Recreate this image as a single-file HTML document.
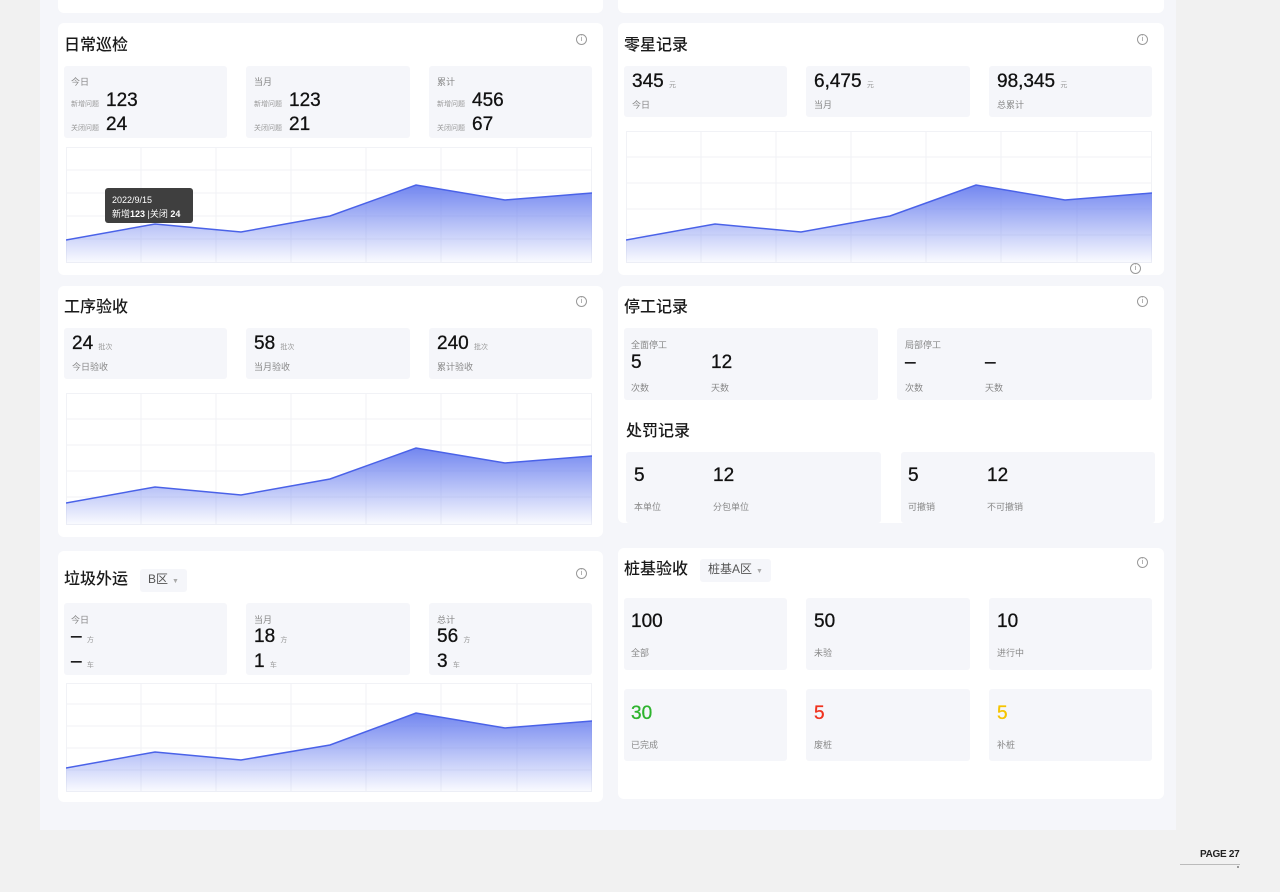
<!DOCTYPE html>
<html><head><meta charset="utf-8">
<style>
*{margin:0;padding:0;box-sizing:border-box}
body{width:1280px;height:892px;background:#f1f1f1;position:relative;overflow:hidden;font-family:"Liberation Sans","Noto Sans CJK SC",sans-serif;color:#1a1a1a}
.a{position:absolute}
.panel{left:40px;top:0;width:1136px;height:830px;background:#f5f6fa}
.card{background:#fff;border-radius:6px}
.box{background:#f5f6fa;border-radius:3px}
.t{font-size:16px;font-weight:500;color:#1a1a1a;line-height:20px;margin-top:2px}
.s{font-size:9px;color:#888}
.xs{font-size:7px;color:#999;-webkit-text-stroke:0}
.n{font-size:19px;color:#111;-webkit-text-stroke:.3px #111}
.ic{width:11px;height:11px;border:1px solid #999;border-radius:50%;font-size:7px;color:#888;text-align:center;line-height:9px}
.dd{background:#f5f6fa;border-radius:3px;font-size:12px;color:#555;padding:0 8px;line-height:21px}
.dd i{font-style:normal;font-size:7px;color:#aaa;margin-left:4px}
svg g{stroke:#f1f2f6}
</style></head><body>
<div class="a panel"></div>
<div class="a card" style="left:58px;top:-10px;width:545px;height:23px"></div>
<div class="a card" style="left:618px;top:-10px;width:546px;height:23px"></div>

<svg width="0" height="0" style="position:absolute"><defs><linearGradient id="g" x1="0" y1="0" x2="0" y2="1"><stop offset="0" stop-color="#6b80ef" stop-opacity=".95"/><stop offset="1" stop-color="#6b80ef" stop-opacity=".03"/></linearGradient></defs></svg>

<!-- card 1 -->
<div class="a card" style="left:58px;top:23px;width:545px;height:252px"></div>
<div class="a t" style="left:64px;top:34px">日常巡检</div>
<div class="a ic" style="left:576px;top:34px">i</div>
<div class="a box" style="left:64px;top:66px;width:163px;height:72px"></div>
<div class="a box" style="left:246px;top:66px;width:164px;height:72px"></div>
<div class="a box" style="left:429px;top:66px;width:163px;height:72px"></div>
<div class="a s" style="left:71px;top:75px">今日</div>
<div class="a xs" style="left:71px;top:99px">新增问题</div><div class="a n" style="left:106px;top:90px">123</div>
<div class="a xs" style="left:71px;top:123px">关闭问题</div><div class="a n" style="left:106px;top:114px">24</div>
<div class="a s" style="left:254px;top:75px">当月</div>
<div class="a xs" style="left:254px;top:99px">新增问题</div><div class="a n" style="left:289px;top:90px">123</div>
<div class="a xs" style="left:254px;top:123px">关闭问题</div><div class="a n" style="left:289px;top:114px">21</div>
<div class="a s" style="left:437px;top:75px">累计</div>
<div class="a xs" style="left:437px;top:99px">新增问题</div><div class="a n" style="left:472px;top:90px">456</div>
<div class="a xs" style="left:437px;top:123px">关闭问题</div><div class="a n" style="left:472px;top:114px">67</div>
<svg class="a" style="left:66px;top:147px" width="526" height="116"><g stroke-width="1" fill="none"><rect x=".5" y=".5" width="525" height="115"/><path d="M75 0V116M150 0V116M225 0V116M300 0V116M375 0V116M451 0V116M0 23H526M0 46H526M0 69H526M0 92H526"/></g><path d="M0 93L89 77L175 85L264 69L350 38L439 53L526 46V116H0Z" fill="url(#g)"/><path d="M0 93L89 77L175 85L264 69L350 38L439 53L526 46" stroke="#4a62e8" stroke-width="1.5" fill="none"/></svg>
<div class="a" style="left:105px;top:188px;width:88px;height:35px;background:#3f3f3f;border-radius:3px;color:#fff;font-size:9px;padding:5px 7px;line-height:14px">2022/9/15<br>新增<b>123</b> |关闭 <b>24</b></div>

<!-- card 2 -->
<div class="a card" style="left:618px;top:23px;width:546px;height:252px"></div>
<div class="a t" style="left:624px;top:34px">零星记录</div>
<div class="a ic" style="left:1137px;top:34px">i</div>
<div class="a box" style="left:624px;top:66px;width:163px;height:51px"></div>
<div class="a box" style="left:806px;top:66px;width:164px;height:51px"></div>
<div class="a box" style="left:989px;top:66px;width:163px;height:51px"></div>
<div class="a n" style="left:632px;top:71px">345 <span class="xs">元</span></div><div class="a s" style="left:632px;top:98px">今日</div>
<div class="a n" style="left:814px;top:71px">6,475 <span class="xs">元</span></div><div class="a s" style="left:814px;top:98px">当月</div>
<div class="a n" style="left:997px;top:71px">98,345 <span class="xs">元</span></div><div class="a s" style="left:997px;top:98px">总累计</div>
<svg class="a" style="left:626px;top:131px" width="526" height="132"><g stroke-width="1" fill="none"><rect x=".5" y=".5" width="525" height="131"/><path d="M75 0V132M150 0V132M225 0V132M300 0V132M375 0V132M451 0V132M0 26H526M0 52H526M0 78H526M0 104H526"/></g><path d="M0 109L89 93L175 101L264 85L350 54L439 69L526 62V132H0Z" fill="url(#g)"/><path d="M0 109L89 93L175 101L264 85L350 54L439 69L526 62" stroke="#4a62e8" stroke-width="1.5" fill="none"/></svg>
<div class="a ic" style="left:1130px;top:263px">i</div>

<!-- card 3 -->
<div class="a card" style="left:58px;top:286px;width:545px;height:251px"></div>
<div class="a t" style="left:64px;top:296px">工序验收</div>
<div class="a ic" style="left:576px;top:296px">i</div>
<div class="a box" style="left:64px;top:328px;width:163px;height:51px"></div>
<div class="a box" style="left:246px;top:328px;width:164px;height:51px"></div>
<div class="a box" style="left:429px;top:328px;width:163px;height:51px"></div>
<div class="a n" style="left:72px;top:333px">24 <span class="xs">批次</span></div><div class="a s" style="left:72px;top:360px">今日验收</div>
<div class="a n" style="left:254px;top:333px">58 <span class="xs">批次</span></div><div class="a s" style="left:254px;top:360px">当月验收</div>
<div class="a n" style="left:437px;top:333px">240 <span class="xs">批次</span></div><div class="a s" style="left:437px;top:360px">累计验收</div>
<svg class="a" style="left:66px;top:393px" width="526" height="132"><g stroke-width="1" fill="none"><rect x=".5" y=".5" width="525" height="131"/><path d="M75 0V132M150 0V132M225 0V132M300 0V132M375 0V132M451 0V132M0 26H526M0 52H526M0 78H526M0 104H526"/></g><path d="M0 110L89 94L175 102L264 86L350 55L439 70L526 63V132H0Z" fill="url(#g)"/><path d="M0 110L89 94L175 102L264 86L350 55L439 70L526 63" stroke="#4a62e8" stroke-width="1.5" fill="none"/></svg>

<!-- card 4 -->
<div class="a card" style="left:618px;top:286px;width:546px;height:237px"></div>
<div class="a t" style="left:624px;top:296px">停工记录</div>
<div class="a ic" style="left:1137px;top:296px">i</div>
<div class="a box" style="left:624px;top:328px;width:254px;height:72px"></div>
<div class="a box" style="left:897px;top:328px;width:255px;height:72px"></div>
<div class="a s" style="left:631px;top:338px">全面停工</div>
<div class="a n" style="left:631px;top:352px">5</div><div class="a n" style="left:711px;top:352px">12</div>
<div class="a s" style="left:631px;top:381px">次数</div><div class="a s" style="left:711px;top:381px">天数</div>
<div class="a s" style="left:905px;top:338px">局部停工</div>
<div class="a n" style="left:905px;top:352px">–</div><div class="a n" style="left:985px;top:352px">–</div>
<div class="a s" style="left:905px;top:381px">次数</div><div class="a s" style="left:985px;top:381px">天数</div>
<div class="a t" style="left:626px;top:420px">处罚记录</div>
<div class="a box" style="left:626px;top:452px;width:255px;height:71px"></div>
<div class="a box" style="left:901px;top:452px;width:254px;height:71px"></div>
<div class="a n" style="left:634px;top:465px">5</div><div class="a n" style="left:713px;top:465px">12</div>
<div class="a s" style="left:634px;top:500px">本单位</div><div class="a s" style="left:713px;top:500px">分包单位</div>
<div class="a n" style="left:908px;top:465px">5</div><div class="a n" style="left:987px;top:465px">12</div>
<div class="a s" style="left:908px;top:500px">可撤销</div><div class="a s" style="left:987px;top:500px">不可撤销</div>

<!-- card 5 -->
<div class="a card" style="left:58px;top:551px;width:545px;height:251px"></div>
<div class="a t" style="left:64px;top:568px">垃圾外运</div>
<div class="a dd" style="left:140px;top:569px">B区<i>▼</i></div>
<div class="a ic" style="left:576px;top:568px">i</div>
<div class="a box" style="left:64px;top:603px;width:163px;height:72px"></div>
<div class="a box" style="left:246px;top:603px;width:164px;height:72px"></div>
<div class="a box" style="left:429px;top:603px;width:163px;height:72px"></div>
<div class="a s" style="left:71px;top:613px">今日</div>
<div class="a n" style="left:71px;top:626px">– <span class="xs">方</span></div><div class="a n" style="left:71px;top:651px">– <span class="xs">车</span></div>
<div class="a s" style="left:254px;top:613px">当月</div>
<div class="a n" style="left:254px;top:626px">18 <span class="xs">方</span></div><div class="a n" style="left:254px;top:651px">1 <span class="xs">车</span></div>
<div class="a s" style="left:437px;top:613px">总计</div>
<div class="a n" style="left:437px;top:626px">56 <span class="xs">方</span></div><div class="a n" style="left:437px;top:651px">3 <span class="xs">车</span></div>
<svg class="a" style="left:66px;top:683px" width="526" height="109"><g stroke-width="1" fill="none"><rect x=".5" y=".5" width="525" height="108"/><path d="M75 0V109M150 0V109M225 0V109M300 0V109M375 0V109M451 0V109M0 21H526M0 43H526M0 65H526M0 87H526"/></g><path d="M0 85L89 69L175 77L264 62L350 30L439 45L526 38V109H0Z" fill="url(#g)"/><path d="M0 85L89 69L175 77L264 62L350 30L439 45L526 38" stroke="#4a62e8" stroke-width="1.5" fill="none"/></svg>

<!-- card 6 -->
<div class="a card" style="left:618px;top:548px;width:546px;height:251px"></div>
<div class="a t" style="left:624px;top:558px">桩基验收</div>
<div class="a dd" style="left:700px;top:559px">桩基A区<i>▼</i></div>
<div class="a ic" style="left:1137px;top:557px">i</div>
<div class="a box" style="left:624px;top:598px;width:163px;height:72px"></div>
<div class="a box" style="left:806px;top:598px;width:164px;height:72px"></div>
<div class="a box" style="left:989px;top:598px;width:163px;height:72px"></div>
<div class="a box" style="left:624px;top:689px;width:163px;height:72px"></div>
<div class="a box" style="left:806px;top:689px;width:164px;height:72px"></div>
<div class="a box" style="left:989px;top:689px;width:163px;height:72px"></div>
<div class="a n" style="left:631px;top:611px">100</div><div class="a s" style="left:631px;top:646px">全部</div>
<div class="a n" style="left:814px;top:611px">50</div><div class="a s" style="left:814px;top:646px">未验</div>
<div class="a n" style="left:997px;top:611px">10</div><div class="a s" style="left:997px;top:646px">进行中</div>
<div class="a n" style="left:631px;top:703px;color:#2db32d;-webkit-text-stroke-color:#2db32d">30</div><div class="a s" style="left:631px;top:738px">已完成</div>
<div class="a n" style="left:814px;top:703px;color:#f0321e;-webkit-text-stroke-color:#f0321e">5</div><div class="a s" style="left:814px;top:738px">废桩</div>
<div class="a n" style="left:997px;top:703px;color:#f5c400;-webkit-text-stroke-color:#f5c400">5</div><div class="a s" style="left:997px;top:738px">补桩</div>

<div class="a" style="left:1200px;top:849px;font-size:10px;font-weight:bold;color:#222;letter-spacing:-.3px">PAGE 27</div>
<div class="a" style="left:1180px;top:864px;width:60px;height:1px;background:#bbb"></div>
<div class="a" style="left:1237px;top:866px;width:2px;height:2px;background:#999"></div>
</body></html>
